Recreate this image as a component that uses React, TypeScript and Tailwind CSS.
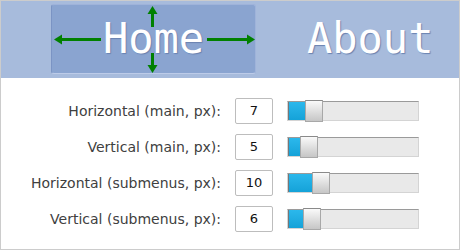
const rows = [
  { label: 'Horizontal (main, px):', value: 7, pos: 18 },
  { label: 'Vertical (main, px):', value: 5, pos: 13 },
  { label: 'Horizontal (submenus, px):', value: 10, pos: 25 },
  { label: 'Vertical (submenus, px):', value: 6, pos: 16 },
]

function Arrows() {
  // green move-arrows drawn over the Home item
  return (
    <svg className="absolute inset-0" width="205" height="70" viewBox="0 0 205 70">
      <g stroke="#008000" strokeWidth="3" fill="none">
        <line x1="8" y1="34.5" x2="49" y2="34.5" />
        <line x1="155" y1="34.5" x2="196" y2="34.5" />
        <line x1="100.5" y1="8" x2="100.5" y2="22" />
        <line x1="100.5" y1="48" x2="100.5" y2="61" />
      </g>
      <g fill="#008000">
        <polygon points="2,34.5 10,29.5 10,39.5" />
        <polygon points="203,34.5 195,29.5 195,39.5" />
        <polygon points="100.5,1 95.5,9 105.5,9" />
        <polygon points="100.5,68 95.5,60 105.5,60" />
      </g>
    </svg>
  )
}

function Slider({ pos }: { pos: number }) {
  return (
    <div className="relative w-[132px] h-[20px] bg-[#e9e9e9] border border-[#d4d4d4] border-t-[#9a9a9a]">
      <div
        className="absolute left-0 top-0 bottom-0 bg-gradient-to-b from-[#2bb8ec] to-[#14a2d8] border-l border-[#777]"
        style={{ width: pos }}
      />
      <div
        className="absolute top-[-2px] w-[18px] h-[22px] bg-gradient-to-b from-[#fafafa] to-[#c6c6c6] border border-[#a8a8a8] border-t-[#8a8a8a]"
        style={{ left: pos - 1 }}
      />
    </div>
  )
}

export default function App() {
  return (
    <div className="w-[460px] h-[250px] border border-[#cccccc] bg-white overflow-hidden">
      <div className="h-[77px] bg-[#a7bbdc] flex items-start font-['DejaVu_Sans_Mono',monospace] text-white text-[42px] leading-none [text-shadow:1px_1px_1px_#6a82b0]">
        <div className="relative ml-[50px] mt-[3px] w-[205px] h-[70px] rounded-[3px] bg-[#8aa4d0] border border-[#9fb3da] border-l-[#7b94c4] border-b-[#bccbe8] flex items-center justify-center">
          <span className="relative">Home</span>
          <Arrows />
        </div>
        <div className="ml-[51px] h-[76px] flex items-center">About</div>
      </div>
      <div className="pt-[20px] flex flex-col gap-[10px] font-['DejaVu_Sans',Verdana,sans-serif] text-[14px] text-[#404040]">
        {rows.map((r) => (
          <div key={r.label} className="flex items-center h-[26px]">
            <div className="w-[220px] text-right">{r.label}</div>
            <div className="ml-[14px] w-[38px] h-[26px] border border-[#bdbdbd] rounded-[2px] flex items-center justify-center text-[13px] text-[#111]">
              {r.value}
            </div>
            <div className="ml-[14px]">
              <Slider pos={r.pos} />
            </div>
          </div>
        ))}
      </div>
    </div>
  )
}
